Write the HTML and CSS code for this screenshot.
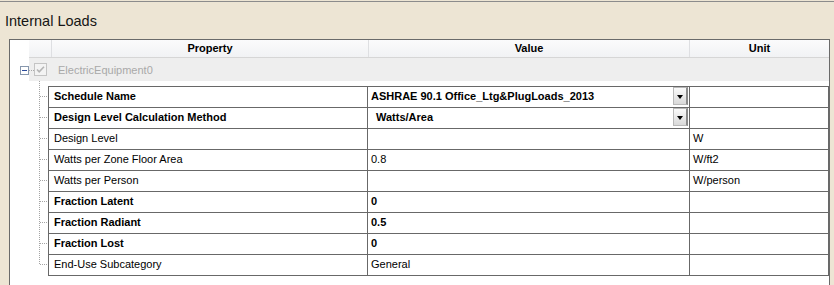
FILE: index.html
```html
<!DOCTYPE html>
<html>
<head>
<meta charset="utf-8">
<link rel="stylesheet" href="styles.css">
</head>
<body>
<div class="topline"></div>
<div class="title">Internal Loads</div>
<div class="panel">
  <div class="header">
    <div class="hcell rowhdr"></div>
    <div class="hcell prop">Property</div>
    <div class="hcell val">Value</div>
    <div class="hcell unit">Unit</div>
  </div>
  <div class="group">
    <div class="group-lead">
      <svg width="14" height="23" viewBox="0 0 14 23">
        <rect x="5.5" y="8.5" width="8" height="8" fill="#fff" stroke="#8797ad"/>
        <line x1="7" y1="12.5" x2="12" y2="12.5" stroke="#2b4a9c"/>
      </svg>
    </div>
    <div class="group-body">
      <svg class="conn" width="5" height="23" viewBox="0 0 5 23">
        <line x1="0" y1="12.5" x2="5" y2="12.5" stroke="#a8a8a8" stroke-dasharray="1 1"/>
      </svg>
      <svg class="chk" width="13" height="13" viewBox="0 0 13 13">
        <rect x="0.5" y="0.5" width="12" height="12" fill="#f3f3f3" stroke="#c4c4c4"/>
        <path d="M3 6.5 L5.2 8.8 L10 3.8" fill="none" stroke="#b4b4b4" stroke-width="1.6"/>
      </svg>
      <span class="gname">ElectricEquipment0</span>
    </div>
  </div>
  <div class="data">
    <svg class="gutter" width="38" height="195" viewBox="0 0 38 195">
      <g stroke="#a4a4a4" stroke-dasharray="1 1">
        <line x1="29.5" y1="0" x2="29.5" y2="184"/>
        <line x1="30" y1="15.5" x2="38" y2="15.5"/>
        <line x1="30" y1="36.5" x2="38" y2="36.5"/>
        <line x1="30" y1="57.5" x2="38" y2="57.5"/>
        <line x1="30" y1="78.5" x2="38" y2="78.5"/>
        <line x1="30" y1="99.5" x2="38" y2="99.5"/>
        <line x1="30" y1="120.5" x2="38" y2="120.5"/>
        <line x1="30" y1="141.5" x2="38" y2="141.5"/>
        <line x1="30" y1="162.5" x2="38" y2="162.5"/>
        <line x1="30" y1="183.5" x2="38" y2="183.5"/>
      </g>
    </svg>
    <div class="grid">
      <div class="c p b">Schedule Name</div>
      <div class="c v b combo"><span>ASHRAE 90.1 Office_Ltg&amp;PlugLoads_2013</span><span class="btn"><i></i></span></div>
      <div class="c u"></div>

      <div class="c p b">Design Level Calculation Method</div>
      <div class="c v b combo"><span class="in">Watts/Area</span><span class="btn"><i></i></span></div>
      <div class="c u"></div>

      <div class="c p">Design Level</div>
      <div class="c v"></div>
      <div class="c u">W</div>

      <div class="c p">Watts per Zone Floor Area</div>
      <div class="c v">0.8</div>
      <div class="c u">W/ft2</div>

      <div class="c p">Watts per Person</div>
      <div class="c v"></div>
      <div class="c u">W/person</div>

      <div class="c p b">Fraction Latent</div>
      <div class="c v b">0</div>
      <div class="c u"></div>

      <div class="c p b">Fraction Radiant</div>
      <div class="c v b">0.5</div>
      <div class="c u"></div>

      <div class="c p b">Fraction Lost</div>
      <div class="c v b">0</div>
      <div class="c u"></div>

      <div class="c p">End-Use Subcategory</div>
      <div class="c v">General</div>
      <div class="c u"></div>
    </div>
  </div>
</div>
</body>
</html>
```
FILE: styles.css
```css
html, body {
  margin: 0;
  padding: 0;
  overflow: hidden;
}
body {
  background: #ede5d4;
  width: 834px;
  height: 285px;
  font-family: "Liberation Sans", Arial, sans-serif;
  font-size: 11px;
  color: #000;
}
.topline {
  height: 1px;
  margin-top: 1px;
  background: #8c8c8c;
}
.title {
  padding: 11px 0 0 5px;
  font-size: 14.5px;
  line-height: 17px;
  color: #151515;
  height: 17px;
}
.panel {
  box-sizing: border-box;
  margin: 9px 0 0 9px;
  width: 821px;
  height: 246px;
  overflow: hidden;
  background: #fff;
  border: 1px solid #6a6a6a;
  border-bottom: none;
}
.header {
  display: flex;
  margin-left: 19px;
  height: 17px;
  border-bottom: 1px solid #d6d6d6;
  background: linear-gradient(#fbfbfc, #f1f2f4);
}
.hcell {
  box-sizing: border-box;
  border-right: 1px solid #dedfe2;
  font-weight: bold;
  text-align: center;
  line-height: 17px;
}
.rowhdr { width: 23px; }
.prop { width: 317px; }
.val { width: 321px; }
.unit { flex: 1; border-right: none; }

.group {
  display: flex;
  height: 23px;
}
.group-lead {
  width: 19px;
  display: flex;
  justify-content: flex-end;
}
.group-body {
  flex: 1;
  display: flex;
  align-items: center;
  background: #eeeeee;
}
.conn { flex: none; }
.chk { flex: none; }
.gname {
  color: #a9a9a9;
  margin-left: 11px;
  line-height: 23px;
  padding-top: 1px;
}

.data {
  display: flex;
  align-items: flex-start;
}
.gutter { flex: none; display: block; }
.grid {
  margin-top: 5px;
  display: grid;
  grid-template-columns: 318px 321px 138px;
  grid-auto-rows: 20px;
  gap: 1px;
  padding: 1px;
  background: #686868;
}
.c {
  background: #fff;
  line-height: 18px;
  padding-bottom: 2px;
  white-space: nowrap;
  overflow: hidden;
}
.p { padding-left: 5px; }
.v { padding-left: 3px; }
.u { padding-left: 3px; }
.b { font-weight: bold; }
.combo {
  display: flex;
  justify-content: space-between;
  align-items: flex-start;
  padding-bottom: 0;
}
.combo .in { padding-left: 5px; line-height: 18px; }
.btn {
  box-sizing: border-box;
  width: 15px;
  height: 18px;
  margin: 0 1px 0 0;
  border: 1px solid #b9b9b9;
  border-right: 2px solid #8a8a8a;
  background: linear-gradient(#fafafa, #d9d9d9);
  display: flex;
  align-items: center;
  justify-content: center;
}
.btn i {
  width: 0;
  height: 0;
  border-left: 3.5px solid transparent;
  border-right: 3.5px solid transparent;
  border-top: 4px solid #000;
  margin-top: 1px;
}
```
